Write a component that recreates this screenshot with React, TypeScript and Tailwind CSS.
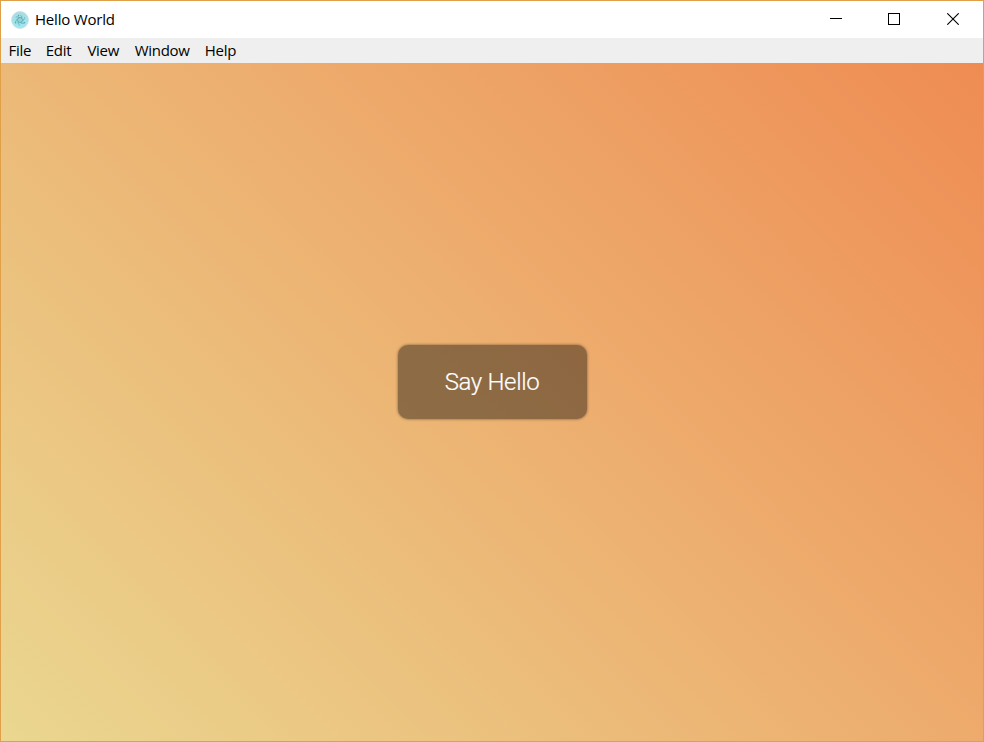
const menus = [
  { name: 'File', width: 'w-[37.3px]' },
  { name: 'Edit', width: 'w-[41.6px]' },
  { name: 'View', width: 'w-[47.4px]' },
  { name: 'Window', width: 'w-[70px]' },
  { name: 'Help', width: 'w-[47px]' },
];

function AppIcon() {
  return (
    <svg width="18" height="18" viewBox="0 0 18 18" fill="none">
      <defs>
        <linearGradient id="disc" x1="0" y1="0" x2="0" y2="1">
          <stop offset="0" stopColor="#a9dbe1" />
          <stop offset="1" stopColor="#9be8f1" />
        </linearGradient>
      </defs>
      <circle cx="9" cy="9" r="8.4" fill="url(#disc)" stroke="#cbdfe1" strokeWidth=".9" />
      <g stroke="#4f9faa" strokeWidth=".65" strokeOpacity=".85">
        <ellipse cx="9" cy="9" rx="5.2" ry="2.1" transform="rotate(30 9 9)" strokeDasharray="9 3" />
        <ellipse cx="9" cy="9" rx="5.2" ry="2.1" transform="rotate(-30 9 9)" strokeDasharray="9 3" />
        <ellipse cx="9" cy="9" rx="5.2" ry="2.1" transform="rotate(90 9 9)" strokeDasharray="9 3" />
      </g>
      <g fill="#4f9faa">
        <circle cx="9" cy="9" r=".6" />
        <circle cx="4.7" cy="11.8" r=".7" />
        <circle cx="13.3" cy="11.8" r=".7" />
        <circle cx="7.6" cy="4.4" r=".6" />
      </g>
    </svg>
  );
}

export default function App() {
  return (
    <div className="flex h-[742px] w-[984px] flex-col overflow-hidden border border-[#e0a048] bg-white font-['Open_Sans','Noto_Sans',sans-serif] text-[15px] leading-5 font-normal text-black">
      <header className="flex h-[37px] shrink-0 items-center">
        <div className="ml-[10px] flex items-center gap-[6px]">
          <AppIcon />
          <span className="pb-[2px] whitespace-nowrap tracking-[-0.2px]">Hello World</span>
        </div>
        <div className="ml-auto flex h-full">
          <button className="flex w-[58px] items-center justify-center" aria-label="Minimize">
            <svg width="12" height="13" shapeRendering="crispEdges"><path d="M0 5.5h12" stroke="#000" /></svg>
          </button>
          <button className="flex w-[58px] items-center justify-center pb-px" aria-label="Maximize">
            <svg width="12" height="12" shapeRendering="crispEdges"><path d="M.5.5h11v11H.5z" fill="none" stroke="#000" /></svg>
          </button>
          <button className="flex w-[60px] items-center justify-center pb-px" aria-label="Close">
            <svg width="12" height="12"><path d="M.3.3l11.4 11.4M11.7.3L.3 11.7" stroke="#000" strokeWidth="1.1" /></svg>
          </button>
        </div>
      </header>
      <nav className="flex h-[25px] shrink-0 items-center bg-[#efefef] pb-[2px] pl-[7.5px] tracking-[-0.3px]">
        {menus.map((m) => (
          <span key={m.name} className={`whitespace-nowrap ${m.width}`}>{m.name}</span>
        ))}
      </nav>
      <main className="flex flex-1 items-center justify-center bg-[linear-gradient(45deg,#ead790,#ef8c53)] pb-[40px]">
        <button className="flex h-[74px] w-[189px] items-center justify-center rounded-[10px] bg-black/40 font-[Roboto,sans-serif] text-2xl font-light tracking-[-0.35px] text-white shadow-[0_0_3px_rgba(0,0,0,0.5)] [-webkit-text-stroke:0.2px_white]">
          Say Hello
        </button>
      </main>
    </div>
  );
}
